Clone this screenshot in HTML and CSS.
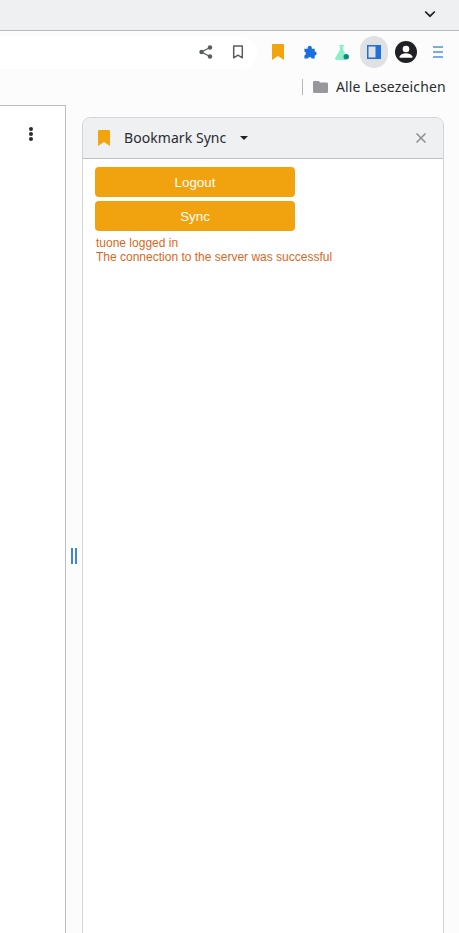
FILE: index.html
```html
<!DOCTYPE html>
<html lang="de">
<head>
<meta charset="utf-8">
<title>Bookmark Sync</title>
<link rel="stylesheet" href="styles.css">
</head>
<body>
<header class="tabstrip">
  <svg class="chevron" width="12" height="8" viewBox="0 0 12 8"><path d="M1.2 1.5 6 6.2l4.800-4.700" fill="none" stroke="#1f2023" stroke-width="1.700"/></svg>
</header>
<nav class="toolbar">
  <div class="omnibox">
    <svg class="ico share" width="16" height="16" viewBox="0 0 16 16"><g fill="#5a5c60"><circle cx="3.500" cy="8" r="2.200"/><circle cx="12" cy="3.500" r="2.200"/><circle cx="12" cy="12.500" r="2.200"/></g><path d="M12 3.500 3.500 8l8.500 4.500" fill="none" stroke="#5a5c60" stroke-width="1.300"/></svg>
    <svg class="ico star" width="12" height="14" viewBox="0 0 12 14"><path d="M1.700 1h8.600v11.800L6 10.200l-4.300 2.600z" fill="none" stroke="#5a5c60" stroke-width="1.500" stroke-linejoin="round"/></svg>
  </div>
  <div class="extensions">
    <svg class="ext" width="12" height="16" viewBox="0 0 12 16"><path d="M0 .8A.8.8 0 0 1 .8 0h10.400a.8.8 0 0 1 .8.8V16l-6-4-6 4z" fill="#f2a40e"/></svg>
    <svg class="ext" width="15" height="15" viewBox="0 0 16 15"><path d="M5 2.500a2.200 2.200 0 0 1 4.400 0V3.500h3.100v3a2.100 2.100 0 0 1 0 4.200v3.300H9.300a2.100 2.100 0 0 0-4.100 0H1.500v-3.300a2.200 2.200 0 0 0 0-4.200V3.500H5z" fill="#1a6fe0"/></svg>
    <svg class="ext" width="15" height="15" viewBox="0 0 16 16"><path d="M4.500 0h5v1.300H8.800v4.400L12 11a5 5 0 0 0-1 3.500c0 .5.200 1 .4 1.500H1.500C.3 16-.4 14.800.2 13.800L5.200 5.700V1.300h-.7z" fill="#8af0c9"/><circle cx="12" cy="12.500" r="2.900" fill="#0f8a84"/></svg>
    <div class="sidepanel-btn">
      <svg width="14" height="14" viewBox="0 0 14 14"><path d="M0 0h14v14H0zM1.500 1.500v11h7v-11z" fill-rule="evenodd" fill="#1f6fdc"/></svg>
    </div>
    <svg class="avatar" width="22" height="22" viewBox="0 0 22 22"><circle cx="11" cy="11" r="11" fill="#202124"/><circle cx="11" cy="8" r="3.300" fill="#fff"/><path d="M4.600 15.500c1-2.500 4-3.200 6.400-3.200s5.400.7 6.400 3.200v1.200H4.600z" fill="#fff"/></svg>
    <svg class="menu" width="10" height="12" viewBox="0 0 10 12"><path d="M0 1h10M0 6h10M0 11h10" stroke="#4d8fdc" stroke-width="1.600"/></svg>
  </div>
</nav>
<div class="bookmarks">
  <span class="divider"></span>
  <svg class="folder" width="15" height="12" viewBox="0 0 15 12"><path d="M1.300 0h4.400l1.500 1.500h6.500A1.300 1.300 0 0 1 15 2.800v7.900a1.300 1.300 0 0 1-1.300 1.300H1.300A1.300 1.300 0 0 1 0 10.700V1.300A1.300 1.300 0 0 1 1.300 0z" fill="#97989b"/></svg>
  <span class="bookmarks-label">Alle Lesezeichen</span>
</div>
<main class="content">
  <section class="page">
    <span class="kebab"><i></i><i></i><i></i></span>
  </section>
  <div class="splitter"><span class="grip"></span></div>
  <aside class="panel">
    <div class="panel-head">
      <svg class="panel-ico" width="12" height="16" viewBox="0 0 12 16"><path d="M0 1a1 1 0 0 1 1-1h10a1 1 0 0 1 1 1v15l-6-4-6 4z" fill="#f2a40e"/></svg>
      <span class="panel-title">Bookmark Sync</span>
      <span class="caret"></span>
      <svg class="close" width="10" height="10" viewBox="0 0 10 10"><path d="m.5.5 9 9m0-9-9 9" stroke="#8b8d91" stroke-width="1.500"/></svg>
    </div>
    <div class="panel-body">
      <button class="btn">Logout</button>
      <button class="btn">Sync</button>
      <p class="status">tuone logged in<br>The connection to the server was successful</p>
    </div>
  </aside>
</main>
</body>
</html>
```
FILE: styles.css
```css
* { box-sizing: border-box; }
html, body { margin: 0; height: 933px; overflow: hidden; }
body { background: #fcfcfc; font-family: "Noto Sans", sans-serif; color: #202124; }

.tabstrip {
  height: 31px;
  background: #eef0f2;
  border-bottom: 1px solid #b9bbbe;
  display: flex;
  align-items: center;
  justify-content: flex-end;
  padding-right: 23px;
  padding-bottom: 2px;
}
.chevron { display: block; }

.toolbar {
  height: 38px;
  padding-top: 4px;
  display: flex;
  align-items: center;
  background: #fcfcfc;
}
.omnibox {
  width: 257px;
  height: 33px;
  background: #fff;
  border-radius: 0 17px 17px 0;
  display: flex;
  align-items: center;
  justify-content: flex-end;
  gap: 18px;
  padding-right: 13px;
}
.extensions { display: flex; align-items: center; margin-left: 15px; }
.ext:nth-child(1) { margin-right: 19px; }
.ext:nth-child(2) { margin-right: 17px; }
.ext:nth-child(3) { margin-right: 10px; }
.sidepanel-btn {
  width: 28px;
  height: 32px;
  border-radius: 14px;
  background: #e0e1e3;
  display: flex;
  align-items: center;
  justify-content: center;
  margin-right: 7px;
}
.sidepanel-btn svg { display: block; }
.avatar { margin-right: 16px; }

.bookmarks {
  height: 36px;
  display: flex;
  align-items: center;
  padding-left: 302px;
}
.divider { width: 1px; height: 16px; background: #b5b6b9; margin-right: 10px; }
.folder { margin-right: 8px; }
.bookmarks-label { font-size: 14px; line-height: 20px; letter-spacing: .15px; color: #2b2c2f; }

.content { display: flex; height: 828px; }
.page {
  width: 66px;
  background: #fff;
  border-top: 1px solid #bcbdc0;
  border-right: 1px solid #bcbdc0;
  position: relative;
}
.kebab {
  position: absolute;
  top: 21px;
  left: 29px;
  display: flex;
  flex-direction: column;
  gap: 1px;
}
.kebab i { width: 4px; height: 4px; border-radius: 50%; background: #2a2b2e; display: block; }

.splitter {
  width: 16px;
  display: flex;
  justify-content: center;
  padding-top: 443px;
}
.grip {
  width: 6px;
  height: 16px;
  border-left: 2px solid #3f86db;
  border-right: 2px solid #3f86db;
}

.panel {
  width: 362px;
  margin-top: 12px;
  margin-bottom: -20px;
  background: #fff;
  border: 1px solid #d3d4d7;
  border-radius: 8px 8px 0 0;
}
.panel-head {
  height: 41px;
  background: #eef0f2;
  border-bottom: 1px solid #bfc0c4;
  border-radius: 7px 7px 0 0;
  display: flex;
  align-items: center;
  padding-left: 15px;
}
.panel-title { font-size: 14px; line-height: 18px; letter-spacing: .06px; margin: -1px 0 0 14px; color: #2b2c2f; }
.caret {
  margin-left: 14px;
  border-left: 4px solid transparent;
  border-right: 4px solid transparent;
  border-top: 4px solid #202124;
}
.close { margin-left: auto; margin-right: 17px; }

.panel-body { padding: 8px 12px; }
.btn {
  display: block;
  width: 200px;
  height: 30px;
  margin-bottom: 4px;
  padding: 0;
  border: 0;
  border-radius: 4px;
  background: #f0a30e;
  color: #fff;
  font: 13.333px "Liberation Sans", Arial, sans-serif;
}
.status {
  margin: 5px 0 0 1px;
  font: 12px/14px "Liberation Sans", Arial, sans-serif;
  color: #db671e;
}
```
